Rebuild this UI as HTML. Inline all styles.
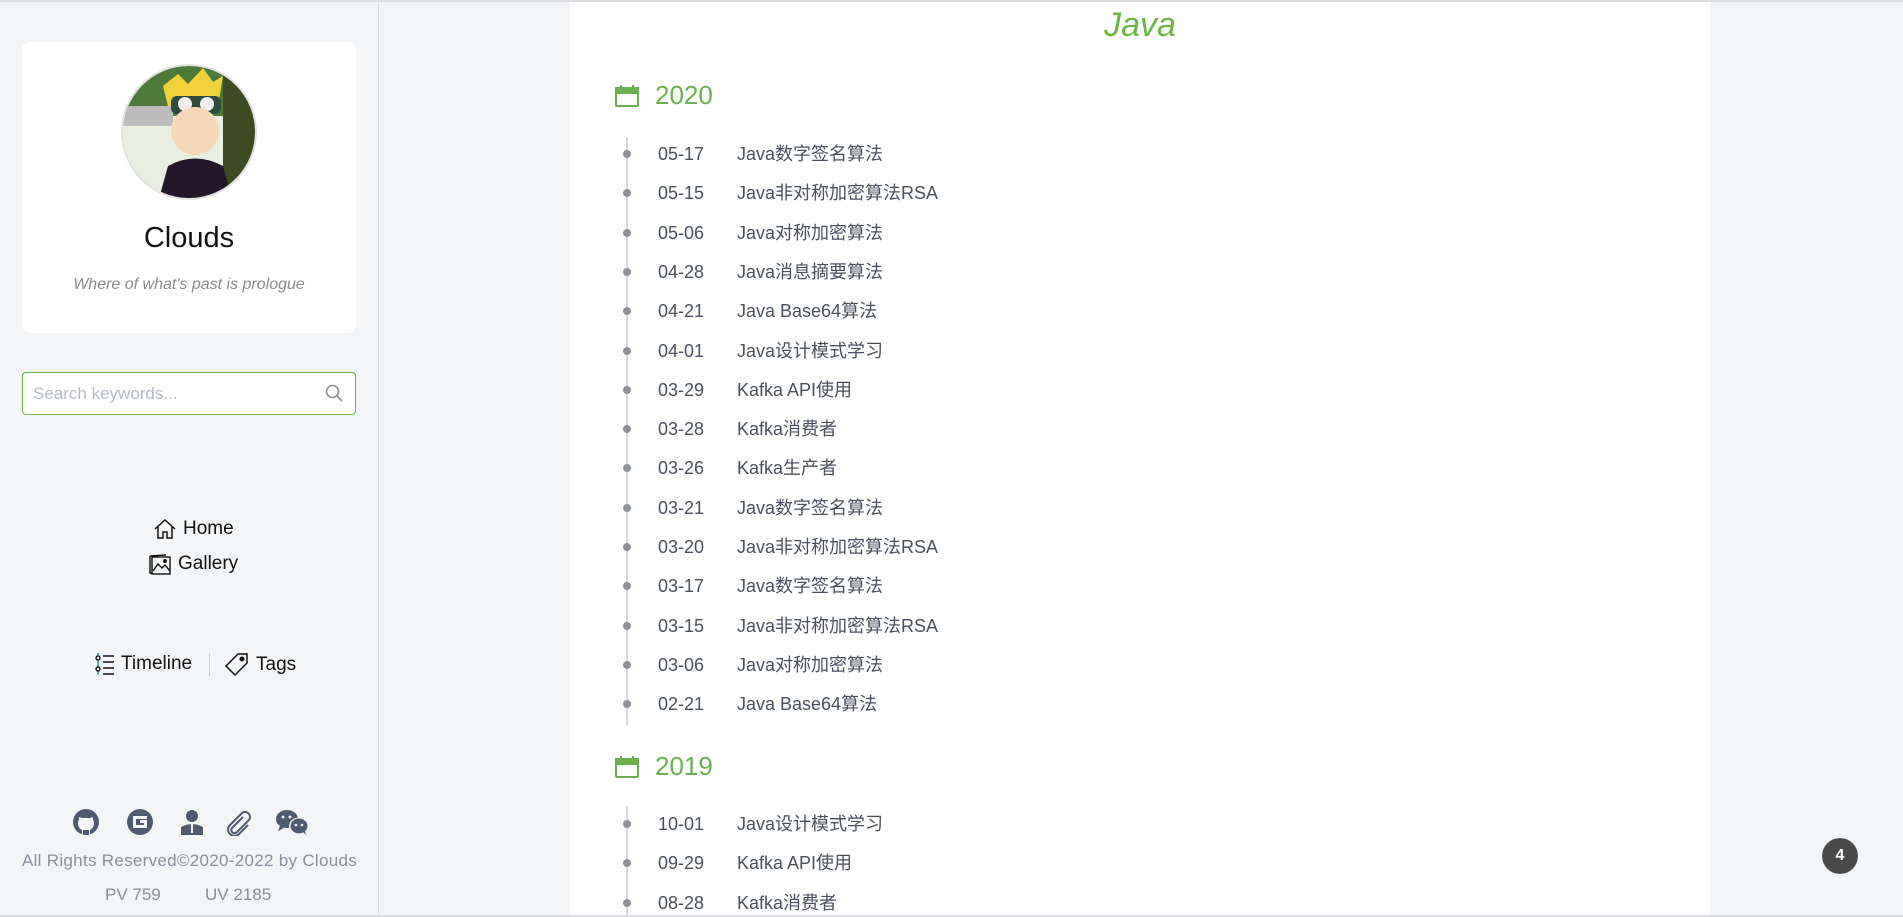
<!DOCTYPE html>
<html style="overflow:hidden;width:1903px;height:917px"><head><meta charset="utf-8"><style>
*{margin:0;padding:0;box-sizing:border-box}
body{width:1903px;height:917px;overflow:hidden;background:#f4f5f7;font-family:"Liberation Sans","Noto Sans CJK SC",sans-serif;position:relative}
.a{position:absolute}
#top{left:0;top:0;width:1903px;height:2px;background:#dcdde0}
#side{left:0;top:2px;width:379px;height:915px;border-right:1px solid #dcdde0}
#card{left:22px;top:42px;width:334px;height:291px;background:#fff;border-radius:8px}
#av{left:121px;top:64px;width:136px;height:136px;border-radius:50%;border:2px solid #e2e2e2;overflow:hidden;background:#fff}
#search{left:22px;top:372px;width:334px;height:43px;border:1px solid #6ab04c;border-radius:4px;background:#fff;color:#b5bac4;font-size:17px;padding:11px 10px}
.nav{font-size:19px;color:#111;display:flex;align-items:center;gap:6px;white-space:nowrap}
#main{left:570px;top:2px;width:1140px;height:915px;background:#fff}
.yr{color:#6ab04c;font-size:26px;display:flex;align-items:center;gap:16px;left:615px}
.it{left:0;width:1200px;font-size:18px;color:#4b5060;height:24px;line-height:24px;white-space:nowrap}
.dot{position:absolute;left:623px;width:8px;height:8px;border-radius:50%;background:#8e919b}
.d{position:absolute;left:658px}
.t{position:absolute;left:737px;white-space:nowrap}
.ln{position:absolute;left:626px;width:2px;background:#d6d8dc}
</style></head><body>
<div class="a" id="top"></div>
<div class="a" id="side"></div>
<div class="a" id="card"></div>
<div class="a" id="av"><svg width="136" height="136" viewBox="0 0 136 136"><rect width="136" height="136" fill="#e8efe0"/><rect x="0" y="0" width="136" height="50" fill="#4d7a3a"/><rect x="0" y="40" width="50" height="20" fill="#bbb"/><rect x="100" y="0" width="36" height="136" fill="#3e4a22"/><path d="M40 20 L55 8 L65 18 L80 2 L90 16 L100 10 L95 40 L45 40Z" fill="#f2d23a"/><rect x="48" y="30" width="50" height="18" rx="6" fill="#2e4a3a"/><circle cx="62" cy="38" r="7" fill="#eee"/><circle cx="84" cy="38" r="7" fill="#eee"/><ellipse cx="72" cy="65" rx="24" ry="24" fill="#f6d8b8"/><path d="M35 136 L45 100 Q72 85 100 100 L110 136Z" fill="#22182a"/></svg></div>
<div class="a" style="left:22px;width:334px;top:222px;text-align:center;font-size:29px;color:#111">Clouds</div>
<div class="a" style="left:22px;width:334px;top:276px;text-align:center;font-size:16px;font-style:italic;color:#8a8a8a">Where of what's past is prologue</div>
<div class="a" id="search">Search keywords...</div>
<svg class="a" style="left:324px;top:383px" width="20" height="20" viewBox="0 0 20 20" fill="none" stroke="#8a8f99" stroke-width="1.6"><circle cx="8.5" cy="8.5" r="6"/><path d="M13 13l5 5"/></svg>
<div class="a nav" style="left:153px;top:518px"><svg width="24" height="22" viewBox="0 0 24 22" fill="none" stroke="#111" stroke-width="1.5"><path d="M2 11L12 2l10 9M5 9v11h5v-6h4v6h5V9"/></svg>Home</div>
<div class="a nav" style="left:148px;top:552px"><svg width="24" height="24" viewBox="0 0 24 24" fill="none" stroke="#111" stroke-width="1.4"><path d="M2 4l16-1"/><rect x="4" y="5" width="18" height="17"/><path d="M2 4v17h2M5 19l5-7 4 4 3-3 5 6"/><circle cx="17" cy="9" r="1.3" fill="#111"/></svg>Gallery</div>
<div class="a nav" style="left:95px;top:652px"><svg width="20" height="24" viewBox="0 0 20 24" fill="none" stroke="#111" stroke-width="1.4"><path d="M3 1v22" stroke="#2a7fd4"/><circle cx="3" cy="6" r="2" fill="#fff"/><circle cx="3" cy="17" r="2" fill="#fff"/><path d="M8 4h11M8 10h11M8 16h11M8 22h11"/></svg>Timeline</div>
<div class="a" style="left:209px;top:653px;width:1px;height:23px;background:#ccc"></div>
<div class="a nav" style="left:224px;top:652px"><svg width="26" height="26" viewBox="0 0 26 26" fill="none" stroke="#111" stroke-width="1.5"><path d="M14 2h9v9L11 23 2 14Z"/><circle cx="18" cy="7" r="1.8" fill="#111"/></svg>Tags</div>
<svg class="a" style="left:73px;top:809px" width="240" height="27" viewBox="0 0 240 27" fill="#505a70">
<circle cx="13" cy="13" r="13"/><path d="M9 26v-5c-2-1-4-3-4-7 0-2 1-3 1-3l0-3 3 1h8l3-1 0 3s1 1 1 3c0 4-2 6-4 7v5Z" fill="#f4f5f7"/><path d="M10 26v-5h6v5z"/>
<circle cx="67" cy="13" r="13"/><path d="M60 7h14v3H63v6h8v-2h-4v-3h7v8H60Z" fill="#f4f5f7"/>
<circle cx="119" cy="7" r="6"/><path d="M108 26v-8q11-6 22 0v8Z"/><path d="M118 15h2v9h-2z" fill="#f4f5f7"/>
<path d="M170 8l-11 11a3 3 0 0 0 5 4l12-12a5 5 0 0 0-7-7L157 16a6 6 0 0 0 9 9l9-9" fill="none" stroke="#505a70" stroke-width="2"/>
<ellipse cx="214" cy="10" rx="11" ry="9"/><path d="M207 17l-2 5 6-3z"/><circle cx="210" cy="8" r="1.5" fill="#f4f5f7"/><circle cx="217" cy="8" r="1.5" fill="#f4f5f7"/>
<ellipse cx="226" cy="17" rx="10" ry="8.5" fill="#f4f5f7"/><ellipse cx="226" cy="17" rx="8.5" ry="7.5"/><path d="M230 23l3 3-1-4z"/><circle cx="223" cy="16" r="1.3" fill="#f4f5f7"/><circle cx="229" cy="16" r="1.3" fill="#f4f5f7"/>
</svg>
<div class="a" style="left:0;width:379px;top:851px;text-align:center;font-size:17px;color:#8a8f99;letter-spacing:0.3px;white-space:nowrap">All Rights Reserved©2020-2022 by Clouds</div>
<div class="a" style="left:105px;top:885px;font-size:17px;color:#8a8f99">PV 759</div>
<div class="a" style="left:205px;top:885px;font-size:17px;color:#8a8f99">UV 2185</div>
<div class="a" id="main"></div>
<div class="a" style="left:570px;width:1140px;top:6px;text-align:center;font-size:34px;font-style:italic;color:#6cb542">Java</div>
<div class="a yr" style="top:80px"><svg width="24" height="22" viewBox="0 0 24 22" fill="none" stroke="#6ab04c" stroke-width="2"><rect x="1" y="3" width="22" height="18" rx="1" fill="#fff"/><rect x="1" y="3" width="22" height="5" fill="#6ab04c"/><path d="M6 0v5M18 0v5"/></svg>2020</div>
<div class="a yr" style="top:751px"><svg width="24" height="22" viewBox="0 0 24 22" fill="none" stroke="#6ab04c" stroke-width="2"><rect x="1" y="3" width="22" height="18" rx="1" fill="#fff"/><rect x="1" y="3" width="22" height="5" fill="#6ab04c"/><path d="M6 0v5M18 0v5"/></svg>2019</div>
<div class="ln" style="top:137px;height:588px"></div>
<div class="ln" style="top:806px;height:109px"></div>
<div id="list"></div>
<div class="a" style="left:1822px;top:838px;width:36px;height:36px;border-radius:50%;background:#4a4a4a;color:#fff;font-weight:bold;font-size:16px;text-align:center;line-height:36px">4</div>
<div class="a" style="left:0;top:915px;width:1903px;height:2px;background:#dcdde0"></div>
<script>
var a=[["05-17","Java数字签名算法"],["05-15","Java非对称加密算法RSA"],["05-06","Java对称加密算法"],["04-28","Java消息摘要算法"],["04-21","Java Base64算法"],["04-01","Java设计模式学习"],["03-29","Kafka API使用"],["03-28","Kafka消费者"],["03-26","Kafka生产者"],["03-21","Java数字签名算法"],["03-20","Java非对称加密算法RSA"],["03-17","Java数字签名算法"],["03-15","Java非对称加密算法RSA"],["03-06","Java对称加密算法"],["02-21","Java Base64算法"]];
var b=[["10-01","Java设计模式学习"],["09-29","Kafka API使用"],["08-28","Kafka消费者"]];
var h="";
function add(arr,y0){arr.forEach(function(x,i){var y=y0+i*39.3;h+='<div class="a it" style="top:'+(y-12)+'px"><span class="dot" style="top:8px"></span><span class="d">'+x[0]+'</span><span class="t">'+x[1]+'</span></div>';});}
add(a,154);add(b,824);
document.getElementById("list").innerHTML=h;
</script>
</body></html>
